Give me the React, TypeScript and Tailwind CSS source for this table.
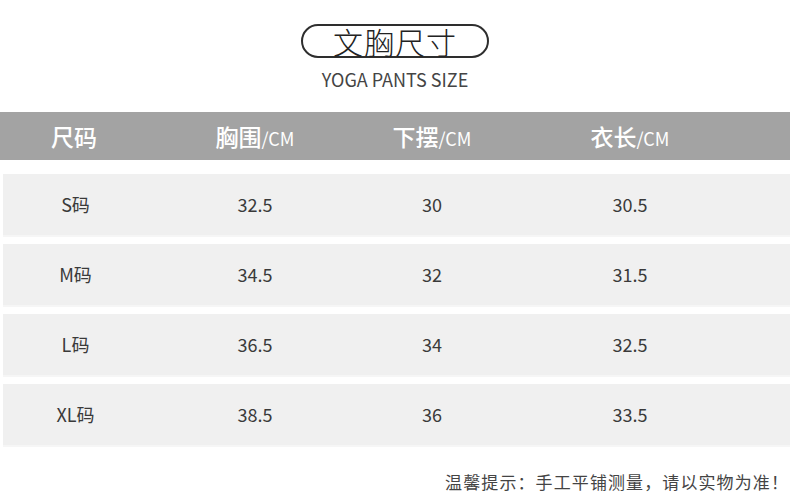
const rows = [
  { size: 'S码', chest: '32.5', hem: '30', length: '30.5' },
  { size: 'M码', chest: '34.5', hem: '32', length: '31.5' },
  { size: 'L码', chest: '36.5', hem: '34', length: '32.5' },
  { size: 'XL码', chest: '38.5', hem: '36', length: '33.5' },
];

const headers = [
  { name: '尺码', unit: '' },
  { name: '胸围', unit: '/CM' },
  { name: '下摆', unit: '/CM' },
  { name: '衣长', unit: '/CM' },
];

export default function App() {
  return (
    <div
      className="w-[790px] h-[496px] bg-white overflow-hidden text-[#333]"
      style={{ fontFamily: '"Noto Sans CJK SC", "Noto Sans", sans-serif' }}
    >
      {/* Title */}
      <div className="flex flex-col items-center pt-[24px]">
        <div className="w-[188px] h-[34px] rounded-full border-2 border-[#2e2e2e] flex items-center justify-center">
          <span className="text-[30px] leading-none font-light text-[#222] tracking-[1px]">文胸尺寸</span>
        </div>
        <div className="mt-[10px] text-[18px] leading-[22px] text-[#444]">YOGA PANTS SIZE</div>
      </div>

      {/* Header bar */}
      <div className="mt-[22px] h-[48px] bg-[#a3a3a3] grid grid-cols-[148px_214px_140px_256px] items-center text-white">
        {headers.map((h) => (
          <div key={h.name} className="flex items-baseline justify-center">
            <span className="text-[23px] font-medium leading-none">{h.name}</span>
            {h.unit && <span className="text-[18px] leading-none">{h.unit}</span>}
          </div>
        ))}
      </div>

      {/* Rows */}
      <div className="mt-[14px] ml-[3px] flex flex-col gap-[7px]">
        {rows.map((r) => (
          <div
            key={r.size}
            className="h-[63px] bg-[#f0f0f0] border-b-2 border-[#f6f6f6] grid grid-cols-[145px_214px_140px_256px] items-center text-[18px] text-[#3a3a3a]"
          >
            <div className="text-center">{r.size}</div>
            <div className="text-center">{r.chest}</div>
            <div className="text-center">{r.hem}</div>
            <div className="text-center">{r.length}</div>
          </div>
        ))}
      </div>

      {/* Footer note */}
      <div className="mt-[23px] pr-[1px] flex justify-end">
        <span className="text-[17px] leading-[24px] tracking-[1.1px] text-[#444]">温馨提示：手工平铺测量，请以实物为准！</span>
      </div>
    </div>
  );
}
